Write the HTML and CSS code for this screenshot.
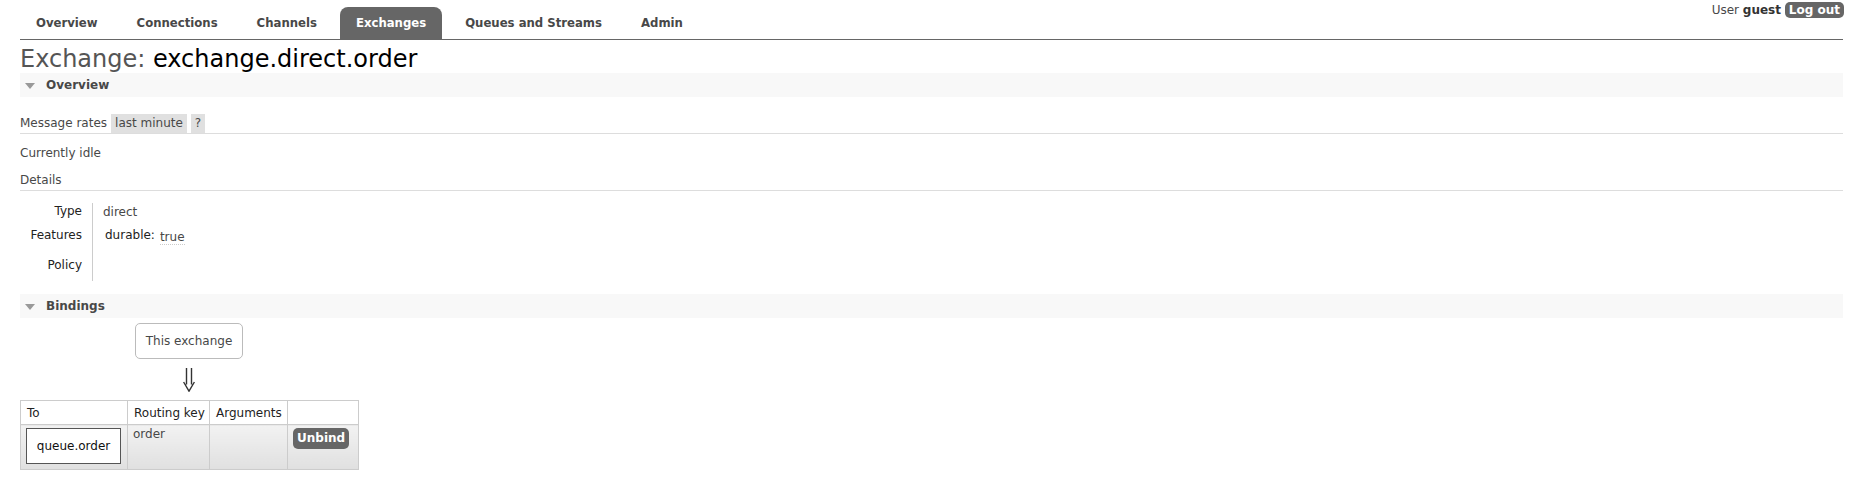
FILE: index.html
```html
<!DOCTYPE html>
<html>
<head>
<meta charset="utf-8">
<title>RabbitMQ Management</title>
<link rel="stylesheet" href="styles.css">
</head>
<body>
<div class="page">
  <div class="header">
    <ul class="menu">
      <li><a>Overview</a></li>
      <li><a>Connections</a></li>
      <li><a>Channels</a></li>
      <li class="selected"><a>Exchanges</a></li>
      <li><a>Queues and Streams</a></li>
      <li><a>Admin</a></li>
    </ul>
    <div class="login">User <b>guest</b> <span class="btn btn-small">Log out</span></div>
  </div>

  <h1>Exchange: <b>exchange.direct.order</b></h1>

  <div class="section">
    <h2 class="section-title"><span class="tri"></span>Overview</h2>
    <div class="section-body">
      <div class="rates">
        <span class="rates-label">Message rates</span>
        <span class="pill">last minute</span>
        <span class="pill">?</span>
      </div>
      <p class="idle">Currently idle</p>
      <h3 class="subhead">Details</h3>
      <table class="facts">
        <tr><th>Type</th><td>direct</td></tr>
        <tr class="tall"><th>Features</th><td><span class="feat-key">durable:</span><abbr class="feat-val">true</abbr></td></tr>
        <tr><th>Policy</th><td></td></tr>
      </table>
    </div>
  </div>

  <div class="section">
    <h2 class="section-title"><span class="tri"></span>Bindings</h2>
    <div class="bindings">
      <div class="this-exchange">This exchange</div>
      <div class="arrow">
        <svg width="12" height="24" viewBox="0 0 12 24"><path d="M3.5 0V16.5M8.5 0V16.5M0.6 14L6 23.2L11.4 14" fill="none" stroke="#333" stroke-width="1.4"/></svg>
      </div>
      <table class="list">
        <colgroup>
          <col class="c1"><col class="c2"><col class="c3"><col class="c4">
        </colgroup>
        <thead>
          <tr><th>To</th><th>Routing key</th><th>Arguments</th><th></th></tr>
        </thead>
        <tbody>
          <tr>
            <td><span class="object">queue.order</span></td>
            <td>order</td>
            <td></td>
            <td><span class="btn btn-unbind">Unbind</span></td>
          </tr>
        </tbody>
      </table>
    </div>
  </div>
</div>
</body>
</html>
```

FILE: styles.css
```css
html, body {
  margin: 0;
  padding: 0;
  background: #fff;
}
body {
  font-family: "DejaVu Sans", Verdana, sans-serif;
  font-size: 12px;
  line-height: 16px;
  color: #484848;
}
.page {
  padding: 0 12px 0 20px;
}
.header {
  display: flex;
  justify-content: space-between;
  align-items: flex-start;
  border-bottom: 1px solid #666;
  height: 39px;
}
.menu {
  list-style: none;
  margin: 7px 0 0 0;
  padding: 0;
  display: flex;
  gap: 7px;
}
.menu li a {
  display: block;
  padding: 9px 16px;
  line-height: 14px;
  font-size: 11.7px;
  font-weight: bold;
  color: #484848;
  border-radius: 8px 8px 0 0;
}
.menu li.selected a {
  background: #666;
  color: #fff;
}
.login {
  padding-top: 2px;
  line-height: 16px;
  color: #484848;
  margin-right: -1px;
}
.login b {
  color: #333;
}
.btn {
  display: inline-block;
  background: #666;
  color: #fff;
  font-weight: bold;
  font-size: 12px;
  border-radius: 5px;
}
.btn-small {
  padding: 0 4px;
  line-height: 16px;
}
h1 {
  margin: 7px 0 0 0;
  font-size: 24px;
  line-height: 24px;
  font-weight: normal;
  color: #555;
}
h1 b {
  font-weight: normal;
  color: #000;
}
.section-title {
  margin: 2px 0 0 0;
  height: 24px;
  line-height: 24px;
  font-size: 12px;
  font-weight: bold;
  background: #f8f8f8;
  color: #484848;
  display: flex;
  align-items: center;
}
.tri {
  display: inline-block;
  width: 0;
  height: 0;
  border-left: 5px solid transparent;
  border-right: 5px solid transparent;
  border-top: 6px solid #999;
  margin: 1px 11px 0 5px;
}
.section-body {
  padding-top: 17px;
}
.rates {
  display: flex;
  gap: 4px;
  border-bottom: 1px solid #ddd;
  line-height: 19px;
  height: 19px;
}
.pill {
  background: #e0e0e0;
  padding: 0 4px;
}
.idle {
  margin: 11px 0 0 0;
}
.subhead {
  margin: 11px 0 0 0;
  font-size: 12px;
  font-weight: normal;
  padding-bottom: 2px;
  border-bottom: 1px solid #ddd;
}
.facts {
  border-collapse: collapse;
  margin: 12px 0 0 0;
}
.facts th {
  text-align: right;
  font-weight: normal;
  color: #222;
  width: 62px;
  padding: 0 10px 8px 0;
  border-right: 1px solid #ccc;
  vertical-align: top;
}
.facts td {
  padding: 1px 10px 7px 10px;
  vertical-align: top;
}
.facts tr.tall th {
  padding-bottom: 13px;
}
.facts tr.tall td {
  padding: 0 10px 13px 12px;
  line-height: 16px;
  height: 16px;
}
.feat-key {
  color: #222;
  margin-right: 5px;
}
.feat-val {
  text-decoration: none;
  border-bottom: 1px dotted #ccc;
  vertical-align: -2px;
  line-height: 14px;
}
.section + .section {
  margin-top: 13px;
}
.bindings {
  padding-top: 5px;
}
.this-exchange {
  margin-left: 115px;
  width: 106px;
  height: 34px;
  line-height: 34px;
  text-align: center;
  border: 1px solid #bbb;
  border-radius: 5px;
}
.arrow {
  margin: 9px 0 0 163px;
  height: 24px;
}
.arrow svg {
  display: block;
}
.list {
  margin-top: 8px;
  border-collapse: collapse;
  table-layout: fixed;
  width: 338px;
}
.list col.c1 { width: 107px; }
.list col.c2 { width: 82px; }
.list col.c3 { width: 78px; }
.list col.c4 { width: 71px; }
.list th, .list td {
  border: 1px solid #ccc;
  text-align: left;
  vertical-align: top;
  white-space: nowrap;
  overflow: hidden;
}
.list th {
  font-weight: normal;
  color: #222;
  height: 24px;
  padding: 4px 5px 0 6px;
  box-sizing: border-box;
}
.list tbody td {
  background: linear-gradient(#f2f2f2, #e0e0e0);
  height: 45px;
  padding: 1px 5px 0 5px;
  box-sizing: border-box;
}
.object {
  display: block;
  margin-top: 2px;
  width: 93px;
  height: 34px;
  line-height: 34px;
  text-align: center;
  border: 1px solid #555;
  background: #fff;
  color: #111;
}
.btn-unbind {
  margin-top: 2px;
  padding: 0 4px;
  height: 21px;
  line-height: 21px;
}
```
